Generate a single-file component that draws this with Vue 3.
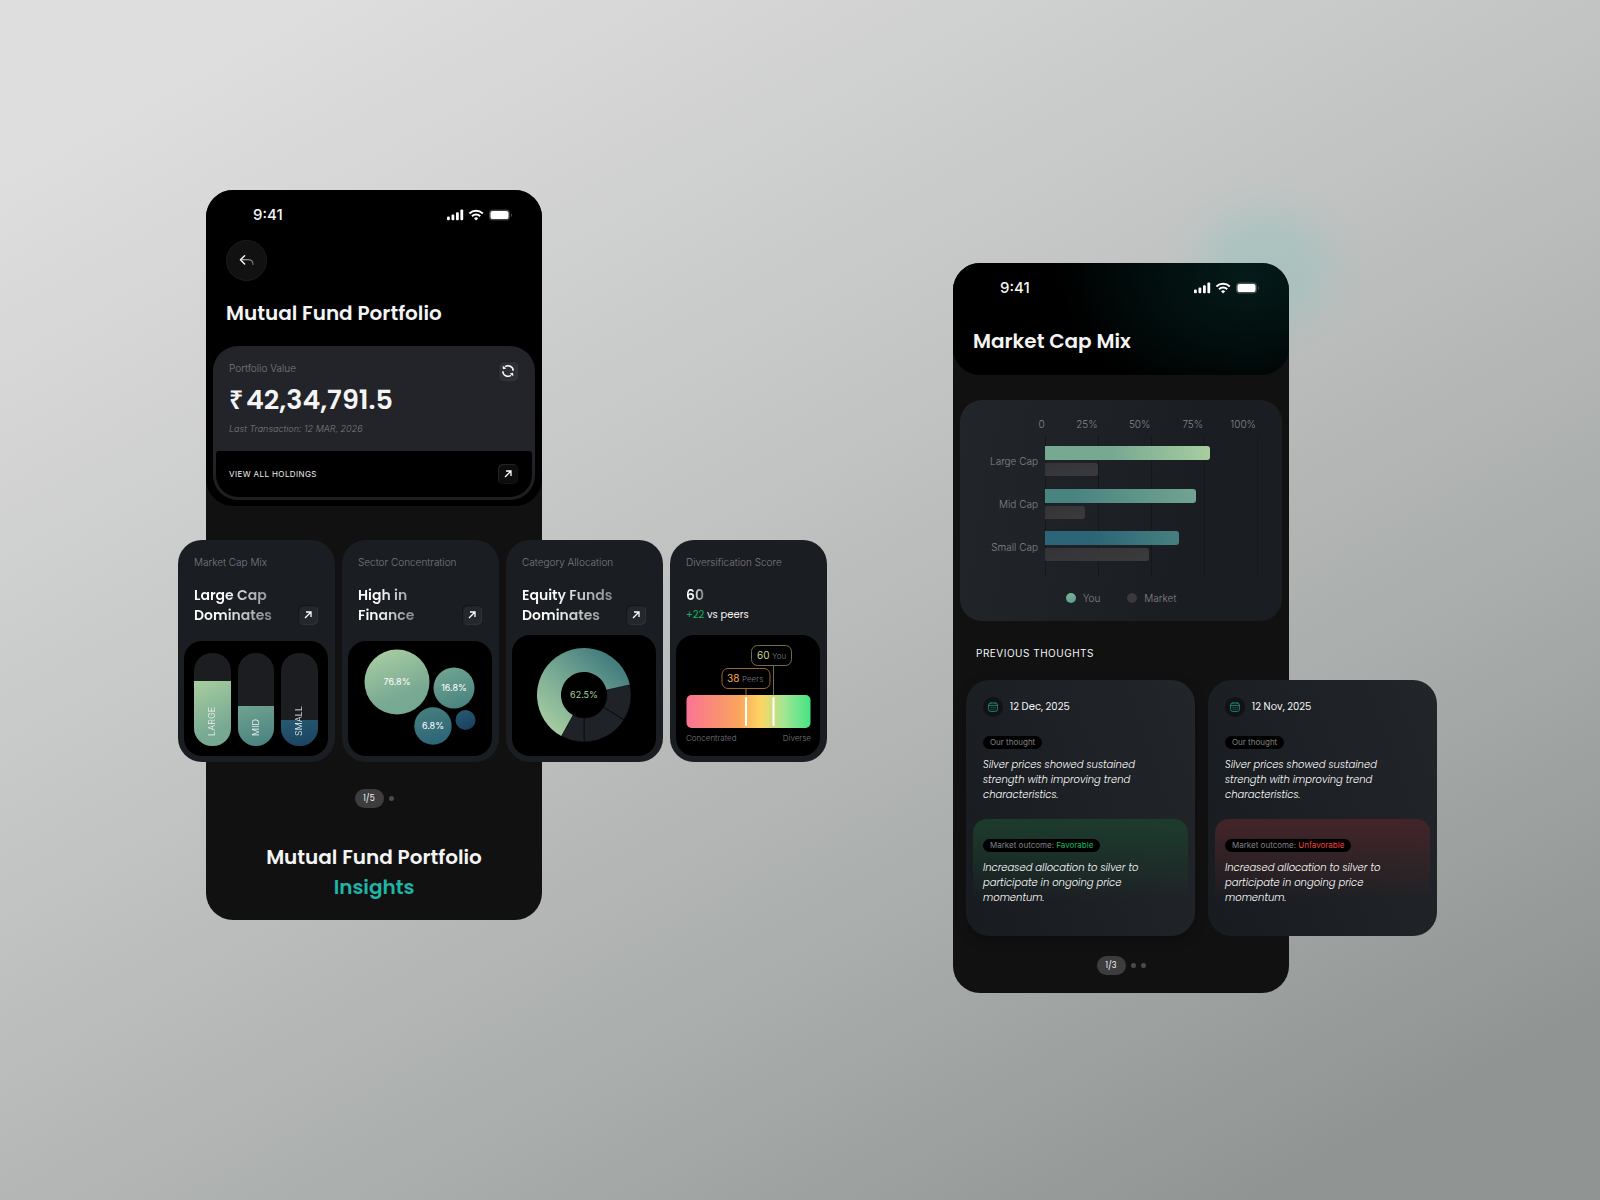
<template>
  <main class="stage">
    <!-- Portfolio overview -->
    <section class="phone phone-portfolio">
      <header class="top top-portfolio">
        <div class="status">
          <span class="status-time">9:41</span>
          <svg class="status-icons" viewBox="0 0 66 12" aria-hidden="true">
            <g fill="#fff">
              <rect x="0" y="7.6" width="2.8" height="3.6" rx="1" />
              <rect x="4.5" y="5.6" width="2.8" height="5.6" rx="1" />
              <rect x="9" y="3.2" width="2.8" height="8" rx="1" />
              <rect x="13.4" y="0.5" width="2.8" height="10.7" rx="1" />
            </g>
            <g fill="none" stroke="#fff" stroke-width="2">
              <path d="M22.4 4.4a9.8 9.8 0 0 1 13.4 0" />
              <path d="M25 7.2a5.9 5.9 0 0 1 8.2 0" />
            </g>
            <path d="M29.1 11.4 27 9.2a3 3 0 0 1 4.2 0z" fill="#fff" />
            <rect x="42" y="0.4" width="21" height="11.2" rx="3.6" fill="#3c3c3e" />
            <rect x="43.5" y="1.9" width="18" height="8.2" rx="2.2" fill="#fff" />
            <path d="M64 4.3c1.6.6 1.6 3 0 3.6z" fill="#4a4a4c" />
          </svg>
        </div>
        <button class="back" type="button" aria-label="Back">
          <svg width="16" height="14" viewBox="0 0 16 14" fill="none" stroke-linecap="round" stroke-linejoin="round">
            <path d="M5.6 1.8 1.4 5.8l4.2 4.2" stroke="#fff" stroke-width="1.4" />
            <path d="M1.8 5.8h7.6c3 0 4.6 1.6 4.6 4.6" stroke="url(#backFade)" stroke-width="1.1" />
            <defs>
              <linearGradient id="backFade" gradientUnits="userSpaceOnUse" x1="2" y1="5" x2="14" y2="10">
                <stop offset="0" stop-color="#ddd" />
                <stop offset="1" stop-color="#777" />
              </linearGradient>
            </defs>
          </svg>
        </button>
        <h1 class="title">Mutual Fund Portfolio</h1>

        <div class="value-card">
          <div class="value-body">
            <div>
              <p class="label">Portfolio Value</p>
              <p class="amount"><span class="rupee">₹</span>42,34,791.5</p>
              <p class="last">Last Transaction: 12 MAR, 2026</p>
            </div>
            <button class="tile tile-light" type="button" aria-label="Refresh">
              <svg width="14" height="14" viewBox="0 0 14 14" fill="none" stroke="#fff" stroke-width="1.5">
                <path d="M4 2.7A5.2 5.2 0 0 1 12.2 6.8M10 11.3A5.2 5.2 0 0 1 1.8 7.2" />
                <path d="M1.6 1.8 2 5.2l3.3-.8zM12.4 12.2 12 8.8l-3.3.8z" fill="#fff" stroke="none" />
              </svg>
            </button>
          </div>
          <div class="value-foot">
            <a class="view-all" href="#holdings">VIEW ALL HOLDINGS</a>
            <button class="tile tile-dark" type="button" aria-label="Open holdings">
              <svg class="arrow" viewBox="0 0 8 8"><path d="M1 7 7 1M2 1h5v5" /></svg>
            </button>
          </div>
        </div>
      </header>

      <div class="insights">
        <article v-for="card in cards" :key="card.id" class="insight">
          <p class="label insight-label">{{ card.label }}</p>
          <div v-if="card.id !== 'score'" class="insight-head">
            <h2 class="insight-title fade">{{ card.lines[0] }}<br>{{ card.lines[1] }}</h2>
            <button class="tile" type="button" :aria-label="`Open ${card.label}`">
              <svg class="arrow" viewBox="0 0 8 8"><path d="M1 7 7 1M2 1h5v5" /></svg>
            </button>
          </div>
          <div v-else class="insight-head insight-score">
            <h2 class="insight-title score-fade">60</h2>
            <p class="peers"><span class="up">+22</span> vs peers</p>
          </div>

          <div v-if="card.id === 'cap'" class="visual visual-caps">
            <div v-for="cap in caps" :key="cap.name" class="cap">
              <div class="cap-fill" :class="`cap-${cap.tone}`" :style="{ height: `${cap.share}%` }"></div>
              <span class="cap-name">{{ cap.name }}</span>
            </div>
          </div>

          <svg v-else-if="card.id === 'sector'" class="visual" viewBox="0 0 144 115">
            <defs>
              <linearGradient id="bubbleA" x1="0.2" y1="0" x2="0.6" y2="1">
                <stop offset="0" stop-color="#a8cea1" />
                <stop offset="0.75" stop-color="#79a993" />
                <stop offset="1" stop-color="#76a892" />
              </linearGradient>
              <linearGradient id="bubbleB" x1="0.2" y1="0" x2="0.6" y2="1">
                <stop offset="0" stop-color="#71a591" />
                <stop offset="1" stop-color="#4a8481" />
              </linearGradient>
              <linearGradient id="bubbleC" x1="0.2" y1="0" x2="0.6" y2="1">
                <stop offset="0" stop-color="#48807f" />
                <stop offset="1" stop-color="#2b6577" />
              </linearGradient>
              <linearGradient id="bubbleD" x1="0.2" y1="0" x2="0.6" y2="1">
                <stop offset="0" stop-color="#265a70" />
                <stop offset="1" stop-color="#1a4160" />
              </linearGradient>
            </defs>
            <g v-for="b in bubbles" :key="b.fill">
              <circle :cx="b.x" :cy="b.y" :r="b.r" :fill="`url(#${b.fill})`" />
              <text v-if="b.text" class="bubble-text" :x="b.x" :y="b.y + 3">{{ b.text }}</text>
            </g>
          </svg>

          <svg v-else-if="card.id === 'category'" class="visual" viewBox="0 0 144 121">
            <defs>
              <linearGradient id="ring" gradientUnits="userSpaceOnUse" x1="38" y1="98" x2="100" y2="26">
                <stop offset="0" stop-color="#a8cea1" />
                <stop offset="0.5" stop-color="#79aa94" />
                <stop offset="1" stop-color="#447e7f" />
              </linearGradient>
            </defs>
            <path v-for="s in slices" :key="s.from" :d="arc(s.from, s.to)" :fill="s.fill" stroke="#000" :stroke-width="s.line" />
            <text class="ring-text" x="72" y="63">62.5%</text>
          </svg>

          <svg v-else class="visual" viewBox="0 0 144 121">
            <defs>
              <linearGradient id="scale">
                <stop offset="0" stop-color="#fb7393" />
                <stop offset="0.42" stop-color="#f9a45c" />
                <stop offset="0.6" stop-color="#fdd562" />
                <stop offset="0.78" stop-color="#a5e694" />
                <stop offset="1" stop-color="#45e483" />
              </linearGradient>
            </defs>
            <path d="M97.5 30v31" stroke="#6b7048" />
            <path d="M70 54v7" stroke="#96692f" />
            <rect x="10.5" y="60" width="124" height="33" rx="5" fill="url(#scale)" />
            <rect x="69" y="62" width="2" height="29" rx="1" fill="#fff" />
            <rect x="96.5" y="62" width="2" height="29" rx="1" fill="#fff" />
            <rect x="75.5" y="10.5" width="40" height="20" rx="6" fill="#000" stroke="#6b7048" />
            <text class="tag-num tag-you" x="81" y="24">60</text>
            <text class="tag-who" x="96" y="24">You</text>
            <rect x="46" y="33.5" width="48" height="20" rx="6" fill="#000" stroke="#96692f" />
            <text class="tag-num tag-peers" x="51" y="47">38</text>
            <text class="tag-who" x="66" y="47">Peers</text>
            <text class="scale-end" x="10" y="106">Concentrated</text>
            <text class="scale-end scale-right" x="135" y="106">Diverse</text>
          </svg>
        </article>
      </div>

      <div class="pager"><span class="page">1/5</span><i class="dot"></i></div>

      <h2 class="outro">Mutual Fund Portfolio<br><span class="accent">Insights</span></h2>
    </section>

    <!-- Market cap detail -->
    <section class="phone phone-market">
      <div class="glow"></div>
      <header class="top top-market">
        <div class="status">
          <span class="status-time">9:41</span>
          <svg class="status-icons" viewBox="0 0 66 12" aria-hidden="true">
            <g fill="#fff">
              <rect x="0" y="7.6" width="2.8" height="3.6" rx="1" />
              <rect x="4.5" y="5.6" width="2.8" height="5.6" rx="1" />
              <rect x="9" y="3.2" width="2.8" height="8" rx="1" />
              <rect x="13.4" y="0.5" width="2.8" height="10.7" rx="1" />
            </g>
            <g fill="none" stroke="#fff" stroke-width="2">
              <path d="M22.4 4.4a9.8 9.8 0 0 1 13.4 0" />
              <path d="M25 7.2a5.9 5.9 0 0 1 8.2 0" />
            </g>
            <path d="M29.1 11.4 27 9.2a3 3 0 0 1 4.2 0z" fill="#fff" />
            <rect x="42" y="0.4" width="21" height="11.2" rx="3.6" fill="#454b4a" />
            <rect x="43.5" y="1.9" width="18" height="8.2" rx="2.2" fill="#fff" />
            <path d="M64 4.3c1.6.6 1.6 3 0 3.6z" fill="#4a4a4c" />
          </svg>
        </div>
        <h1 class="title">Market Cap Mix</h1>
      </header>

      <div class="chart">
        <div class="axis">
          <span v-for="t in ticks" :key="t" class="tick">{{ t }}</span>
        </div>
        <div class="plot">
          <div class="names">
            <span v-for="r in rows" :key="r.name" class="name">{{ r.name }}</span>
          </div>
          <div class="tracks">
            <div v-for="r in rows" :key="r.name" class="pair">
              <div class="bar" :class="`bar-${r.tone}`" :style="{ width: `${r.you}%` }"></div>
              <div class="bar bar-market" :style="{ width: `${r.market}%` }"></div>
            </div>
          </div>
        </div>
        <div class="legend">
          <span class="key"><i class="swatch swatch-you"></i>You</span>
          <span class="key"><i class="swatch"></i>Market</span>
        </div>
      </div>

      <h2 class="section-title">PREVIOUS THOUGHTS</h2>

      <div class="thoughts">
        <article v-for="t in thoughts" :key="t.date" class="thought">
          <div class="thought-body">
            <div class="date">
              <span class="date-icon">
                <svg width="10" height="10" viewBox="0 0 10 10" fill="none" stroke="#1f9c8c" stroke-width="0.8">
                  <rect x="0.6" y="1" width="8.8" height="8.4" rx="2" />
                  <path d="M0.6 3.4h8.8M3 0.3v1.4M7 0.3v1.4" />
                  <path d="M2.6 5.4h1M4.6 5.4h1M6.6 5.4h1M2.6 7.3h1M4.6 7.3h1M6.6 7.3h1" />
                </svg>
              </span>
              {{ t.date }}
            </div>
            <span class="chip">Our thought</span>
            <p class="quote">Silver prices showed sustained<br>strength with improving trend<br>characteristics.</p>
          </div>
          <div class="outcome" :class="t.good ? 'outcome-good' : 'outcome-bad'">
            <span class="chip">Market outcome: <b class="verdict">{{ t.good ? 'Favorable' : 'Unfavorable' }}</b></span>
            <p class="quote">Increased allocation to silver to<br>participate in ongoing price<br>momentum.</p>
          </div>
        </article>
      </div>

      <div class="pager pager-market"><span class="page">1/3</span><i class="dot"></i><i class="dot"></i></div>
    </section>
  </main>
</template>

<script setup>
const cards = [
  { id: 'cap', label: 'Market Cap Mix', lines: ['Large Cap', 'Dominates'] },
  { id: 'sector', label: 'Sector Concentration', lines: ['High in', 'Finance'] },
  { id: 'category', label: 'Category Allocation', lines: ['Equity Funds', 'Dominates'] },
  { id: 'score', label: 'Diversification Score' }
]

const caps = [
  { name: 'LARGE', share: 70, tone: 'large' },
  { name: 'MID', share: 43, tone: 'mid' },
  { name: 'SMALL', share: 28, tone: 'small' }
]

const bubbles = [
  { x: 49, y: 41, r: 32.5, fill: 'bubbleA', text: '76.8%' },
  { x: 106, y: 47, r: 20.5, fill: 'bubbleB', text: '16.8%' },
  { x: 85, y: 85, r: 18.7, fill: 'bubbleC', text: '6.8%' },
  { x: 117.5, y: 79, r: 10, fill: 'bubbleD' }
]

const slices = [
  { from: 77, to: 122, fill: '#1f2227', line: 0.5 },
  { from: 122, to: 180, fill: '#1f2227', line: 0.5 },
  { from: 180, to: 209, fill: '#1f2227', line: 0.5 },
  { from: 209, to: 437, fill: 'url(#ring)', line: 0 }
]

// Ring segment between two clockwise angles, measured from 12 o'clock
function arc(from, to) {
  const point = (deg, r) => {
    const a = (deg * Math.PI) / 180
    return `${(72 + r * Math.sin(a)).toFixed(2)} ${(60 - r * Math.cos(a)).toFixed(2)}`
  }
  const big = to - from > 180 ? 1 : 0
  return `M${point(from, 47)}A47 47 0 ${big} 1 ${point(to, 47)}L${point(to, 23)}A23 23 0 ${big} 0 ${point(from, 23)}Z`
}

const ticks = ['0', '25%', '50%', '75%', '100%']

const rows = [
  { name: 'Large Cap', you: 77.5, market: 25, tone: 'large' },
  { name: 'Mid Cap', you: 71, market: 19, tone: 'mid' },
  { name: 'Small Cap', you: 63, market: 49, tone: 'small' }
]

const thoughts = [
  { date: '12 Dec, 2025', good: true },
  { date: '12 Nov, 2025', good: false }
]
</script>

<style>
body {
  background: #c0c2c1;
}
</style>

<style scoped>
.stage {
  box-sizing: border-box;
  display: flex;
  align-items: flex-start;
  justify-content: space-between;
  min-height: 100vh;
  padding: 190px 311px 0 206px;
  overflow: hidden;
  background: linear-gradient(151deg, #dedede 8%, #c3c5c4 42%, #a8acab 69%, #909492 91%);
  font-family: Inter, "Liberation Sans", sans-serif;
  color: #f4f4f4;
}
h1, h2, p {
  margin: 0;
}
button {
  padding: 0;
  border: 0;
  color: inherit;
  cursor: pointer;
}

.phone {
  position: relative;
  flex: none;
  width: 336px;
  border-radius: 27px;
  background: #111;
}
.phone-market {
  margin-top: 73px;
}
.top {
  position: relative;
  box-sizing: border-box;
  border-radius: 27px;
  background: #000;
}
.top-portfolio {
  padding: 18px 7px 6px;
}
.top-market {
  height: 112px;
  padding: 18px 7px 0;
  background: radial-gradient(ellipse 190px 130px at 88% 12%, #041b19 0%, #020e0e 50%, #000 100%);
}
.glow {
  position: absolute;
  top: -90px;
  right: -80px;
  width: 210px;
  height: 190px;
  background: radial-gradient(closest-side, #45c8bb2e, #45c8bb24 40%, #45c8bb0a 75%, transparent);
}

.status {
  display: flex;
  align-items: center;
  justify-content: space-between;
  height: 14px;
  padding: 0 22px 0 40px;
}
.status-time {
  font-size: 15px;
  font-weight: 500;
  line-height: 14px;
}
.status-icons {
  width: 66px;
  height: 12px;
}
.back {
  display: grid;
  place-items: center;
  width: 41px;
  height: 41px;
  margin: 18px 0 0 13px;
  border: 1px solid #1d1d1d;
  border-radius: 50%;
  background: #111;
}
.title {
  margin: 17px 0 0 13px;
  font-family: Poppins, Inter, sans-serif;
  font-size: 20px;
  font-weight: 600;
  line-height: 30px;
}
.top-market .title {
  margin-top: 31px;
}

.value-card {
  margin-top: 18px;
  padding: 0 3px 3px;
  border-radius: 25px;
  background: linear-gradient(#222429 70%, #1c1e22);
}
.value-body {
  display: flex;
  justify-content: space-between;
  padding: 15px 14px 15px 13px;
}
.label {
  font-size: 10px;
  font-weight: 300;
  line-height: 14px;
  color: #7b7c81;
}
.amount {
  margin-top: 6px;
  font-family: Poppins, Inter, sans-serif;
  font-size: 27px;
  font-weight: 600;
  line-height: 38px;
}
.rupee {
  display: inline-block;
  width: 17px;
  font-family: "Noto Sans", Inter, sans-serif;
  font-size: 25px;
  line-height: 30px;
}
.last {
  margin-top: 3px;
  font-size: 9px;
  font-style: italic;
  font-weight: 300;
  line-height: 14px;
  color: #7b7c81;
}
.value-foot {
  display: flex;
  align-items: center;
  justify-content: space-between;
  height: 46px;
  padding: 0 14px 0 13px;
  border-radius: 3px 3px 22px 22px;
  background: #000;
}
.view-all {
  font-size: 8px;
  letter-spacing: 0.05em;
  color: #f0f0f0;
  text-decoration: none;
}

.tile {
  display: grid;
  flex: none;
  place-items: center;
  width: 20px;
  height: 20px;
  border-radius: 5px;
  background: #24272b;
  box-shadow: inset 1px 1px 1px #121417, inset -1px -1px 1px #303338;
}
.tile-light {
  background: #2e3035;
  box-shadow: inset 1px 1px 1px #1d1f23, inset -1px -1px 1px #35373c;
}
.tile-dark {
  background: #0d0d0d;
  box-shadow: inset 1px 1px 1px #242424, inset -1px -1px 1px #131313;
}
.arrow {
  width: 8px;
  height: 8px;
  fill: none;
  stroke: #fff;
  stroke-width: 1.3;
}

.insights {
  display: flex;
  gap: 7px;
  width: max-content;
  margin: 34px 0 0 -28px;
}
.insight {
  display: flex;
  flex-direction: column;
  box-sizing: border-box;
  width: 157px;
  height: 222px;
  padding: 15px 7px 6px 6px;
  border-radius: 24px;
  background: #1a1d22;
}
.insight-label {
  padding-left: 10px;
}
.insight-head {
  display: flex;
  flex: 1;
  align-items: flex-start;
  justify-content: space-between;
  padding: 16px 10px 0;
}
.insight-head .tile {
  margin-top: 20px;
}
.insight-title {
  font-family: Poppins, Inter, sans-serif;
  font-size: 14px;
  font-weight: 600;
  line-height: 20px;
}
.fade {
  background: linear-gradient(100deg, #fff 35%, #7f8184 100%);
  background-clip: text;
  color: transparent;
}
.score-fade {
  background: linear-gradient(90deg, #fff 30%, #7f8184 100%);
  background-clip: text;
  color: transparent;
}
.insight-score {
  flex-direction: column;
  justify-content: flex-start;
}
.peers {
  font-family: Poppins, Inter, sans-serif;
  font-size: 10px;
  line-height: 20px;
}
.up {
  color: #16b364;
}

.visual {
  display: block;
  flex: none;
  width: 144px;
  border-radius: 18px;
  background: #000;
}
.visual-caps {
  display: flex;
  gap: 7px;
  box-sizing: border-box;
  height: 115px;
  padding: 12px 10px 10px;
}
.cap {
  position: relative;
  display: flex;
  flex: 1;
  align-items: flex-end;
  border-radius: 18px;
  overflow: hidden;
  background: #1b1d21;
}
.cap-fill {
  width: 100%;
}
.cap-large {
  background: linear-gradient(155deg, #a8cea1, #76a892 75%);
}
.cap-mid {
  background: linear-gradient(165deg, #6fa390, #47807f);
}
.cap-small {
  background: linear-gradient(165deg, #265a70, #1a4160);
}
.cap-name {
  position: absolute;
  right: 0;
  bottom: 10px;
  left: 0;
  font-size: 9px;
  font-weight: 300;
  line-height: 36px;
  writing-mode: vertical-rl;
  transform: rotate(180deg);
}
.bubble-text,
.ring-text {
  font-size: 9px;
  text-anchor: middle;
  fill: #fff;
}
.ring-text {
  fill: #a8cea1;
}
.tag-num {
  font-size: 10px;
}
.tag-you {
  fill: #cfd98a;
}
.tag-peers {
  fill: #f9a94f;
}
.tag-who,
.scale-end {
  font-size: 8px;
  font-weight: 300;
  fill: #7b7c81;
}
.scale-right {
  text-anchor: end;
}

.pager {
  display: flex;
  gap: 5px;
  align-items: center;
  justify-content: center;
  margin-top: 27px;
}
.page {
  width: 29px;
  border-radius: 10px;
  background: #3d3d3f;
  font-family: Poppins, Inter, sans-serif;
  font-size: 8px;
  line-height: 19px;
  text-align: center;
}
.dot {
  width: 5px;
  height: 5px;
  border-radius: 50%;
  background: #4b4b4d;
}
.outro {
  margin-top: 34px;
  padding-bottom: 18px;
  font-family: Poppins, Inter, sans-serif;
  font-size: 20px;
  font-weight: 600;
  line-height: 30px;
  text-align: center;
}
.accent {
  color: #1fb5a8;
}

.chart {
  box-sizing: border-box;
  height: 221px;
  margin: 25px 7px 0;
  padding: 16px 26px 16px 29px;
  border-radius: 22px;
  background: linear-gradient(100deg, #222529, #1a1d22 70%);
  font-size: 10px;
  font-weight: 300;
  color: #85878b;
}
.axis {
  display: flex;
  line-height: 16px;
}
.tick {
  width: 53px;
  text-align: right;
}
.tick:first-child {
  width: 56px;
}
.plot {
  display: flex;
  margin-top: 3px;
}
.names {
  flex: none;
  width: 49px;
  padding-top: 5px;
}
.name {
  display: block;
  height: 43px;
  line-height: 42px;
  text-align: right;
  white-space: nowrap;
}
.tracks {
  flex: none;
  box-sizing: border-box;
  width: 213px;
  height: 142px;
  margin-left: 7px;
  padding-top: 11px;
  background: repeating-linear-gradient(90deg, #15181b 0 1px, transparent 1px 53px);
}
.pair {
  height: 43px;
}
.pair + .pair {
  height: 42px;
}
.bar {
  height: 14px;
  border-radius: 0 3px 3px 0;
}
.bar-market {
  height: 13px;
  margin-top: 3px;
  background: linear-gradient(165deg, #343335, #3b3b3d);
}
.bar-large {
  background: linear-gradient(80deg, #76a892 40%, #a8cea1);
}
.bar-mid {
  background: linear-gradient(80deg, #4a8481 20%, #71a591);
}
.bar-small {
  background: linear-gradient(80deg, #2b6577 35%, #48807f);
}
.legend {
  display: flex;
  gap: 27px;
  justify-content: center;
  margin-top: 13px;
  padding-right: 3px;
  line-height: 16px;
}
.key {
  display: flex;
  gap: 7px;
  align-items: center;
}
.swatch {
  width: 10px;
  height: 10px;
  border-radius: 50%;
  background: #3a3a3c;
}
.swatch-you {
  background: linear-gradient(160deg, #7fb59b, #5b9a8b);
}

.section-title {
  margin: 24px 0 0 23px;
  font-size: 10px;
  font-weight: 400;
  line-height: 16px;
  letter-spacing: 0.05em;
}
.thoughts {
  display: flex;
  gap: 13px;
  width: max-content;
  margin: 19px 0 0 13px;
}
.thought {
  display: flex;
  flex-direction: column;
  box-sizing: border-box;
  width: 229px;
  height: 256px;
  padding: 7px 7px 6px;
  border-radius: 24px;
  background: linear-gradient(70deg, #181b1f, #222529);
}
.thought:first-child {
  box-shadow: 0 4px 12px #00000040;
}
.thought-body {
  height: 132px;
  padding: 10px 10px 0;
  box-sizing: border-box;
}
.date {
  display: flex;
  gap: 7px;
  align-items: center;
  font-family: Poppins, Inter, sans-serif;
  font-size: 10px;
  line-height: 20px;
}
.date-icon {
  display: grid;
  place-items: center;
  width: 20px;
  height: 20px;
  border-radius: 50%;
  background: #101214;
}
.chip {
  display: block;
  width: max-content;
  padding: 0 7px;
  border-radius: 7px;
  background: #000;
  font-size: 8px;
  line-height: 13px;
  color: #808285;
}
.date + .chip {
  margin-top: 19px;
}
.quote {
  margin-top: 8px;
  font-family: Poppins, Inter, sans-serif;
  font-size: 10px;
  font-style: italic;
  font-weight: 300;
  line-height: 15px;
  color: #fff;
  white-space: nowrap;
}
.outcome {
  flex: 1;
  padding: 20px 10px 0;
  border-radius: 14px;
}
.outcome-good {
  background: linear-gradient(#1c3c2d, #1c3c2d00 75%);
}
.outcome-bad {
  background: linear-gradient(#432529, #43252900 75%);
}
.verdict {
  font-weight: 400;
}
.outcome-good .verdict {
  color: #1cb866;
}
.outcome-bad .verdict {
  color: #f04438;
}
.pager-market {
  margin-top: 20px;
  padding-bottom: 18px;
}
</style>
